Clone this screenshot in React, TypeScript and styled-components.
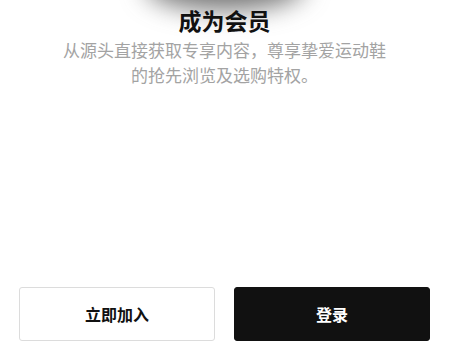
import React from "react";
import styled, { createGlobalStyle } from "styled-components";

const GlobalStyle = createGlobalStyle`
  html, body {
    margin: 0;
    padding: 0;
    background: #fff;
  }
  body {
    font-family: "Noto Sans CJK SC", "Noto Sans", sans-serif;
  }
`;

const Page = styled.div`
  position: relative;
  height: 354px;
  display: flex;
  flex-direction: column;
  align-items: center;
  overflow: hidden;
  background: #fff;
`;

// soft shadow of the picture that sits just above this view
const Shade = styled.div`
  position: absolute;
  top: -40px;
  left: 50%;
  width: 160px;
  height: 50px;
  transform: translateX(-50%);
  border-radius: 50%;
  background: rgba(70, 70, 70, 0.75);
  filter: blur(13px);
`;

const Title = styled.h1`
  position: relative;
  margin: 0;
  padding-top: 5px;
  font-size: 23px;
  line-height: 30px;
  font-weight: 700;
  color: #111;
`;

const Subtitle = styled.p`
  margin: 2px 0 0;
  font-size: 17px;
  line-height: 25px;
  font-weight: 400;
  color: #a3a3a3;
  text-align: center;
`;

const Actions = styled.div`
  margin-top: auto;
  width: 100%;
  box-sizing: border-box;
  padding: 0 19px 13px;
  display: grid;
  grid-template-columns: 1fr 1fr;
  gap: 19px;
`;

const Button = styled.button<{ $dark?: boolean }>`
  height: 54px;
  border-radius: 3px;
  border: 1px solid ${(p) => (p.$dark ? "#111" : "#dcdcdc")};
  background: ${(p) => (p.$dark ? "#111" : "#fff")};
  color: ${(p) => (p.$dark ? "#fff" : "#111")};
  font-family: inherit;
  font-size: 16px;
  font-weight: 700;
  cursor: pointer;
`;

const App: React.FC = () => {
  return (
    <>
      <GlobalStyle />
      <Page>
        <Shade />
        <Title>成为会员</Title>
        <Subtitle>
          从源头直接获取专享内容，尊享挚爱运动鞋
          <br />
          的抢先浏览及选购特权。
        </Subtitle>
        <Actions>
          <Button>立即加入</Button>
          <Button $dark>登录</Button>
        </Actions>
      </Page>
    </>
  );
};

export default App;
